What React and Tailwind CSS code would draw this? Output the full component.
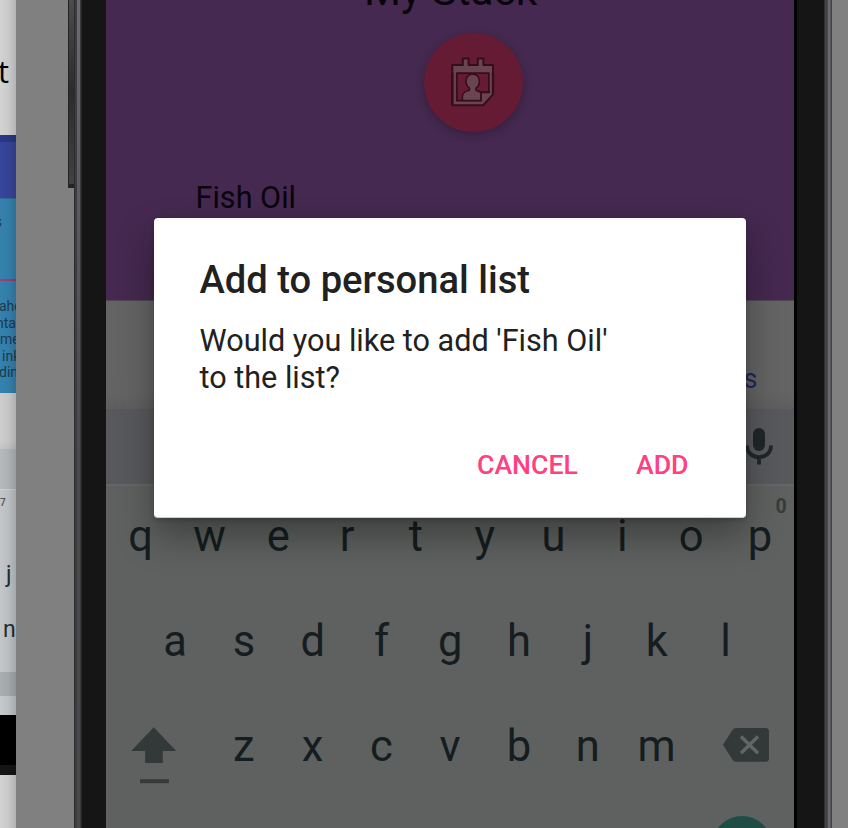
const TOP = ['q', 'w', 'e', 'r', 't', 'y', 'u', 'i', 'o', 'p'];
const MIDDLE = ['a', 's', 'd', 'f', 'g', 'h', 'j', 'k', 'l'];
const BOTTOM = ['z', 'x', 'c', 'v', 'b', 'n', 'm'];

function Key({ children }) {
  return (
    <div className="w-[68.8px] shrink-0 pl-[0.6px] text-center text-[43.5px] leading-[52px] text-[#151d20]">
      {children}
    </div>
  );
}

// Edge of the neighbouring phone's page
function NeighbourStrip() {
  return (
    <div className="relative flex w-4 shrink-0 flex-col overflow-hidden bg-[#d0d0d0]">
      <div className="flex h-[135px] shrink-0 justify-end bg-[#d3d3d3] pt-[51px] pr-[7px] font-['Open_Sans',sans-serif] text-[31px] leading-[40px] text-black">
        <span>t</span>
      </div>
      <div className="h-[7px] shrink-0 bg-[#2a3787]" />
      <div className="h-[56px] shrink-0 bg-[#37459b]" />
      <div className="flex h-[81px] shrink-0 justify-end border-t border-[#2e6f9a] bg-[#3582af] pt-[10px] pr-[14px] text-[17px] leading-[24px] text-[#1b3b4e]">
        <span>s</span>
      </div>
      <div className="h-[2px] shrink-0 bg-[#a23c78]" />
      <div className="flex h-[112px] shrink-0 flex-col bg-[#3582af] pt-[17px] text-[14px] leading-[16.5px] text-[#1b3b4e]">
        <span className="-ml-[1px]">ahe</span>
        <span className="-ml-[4px]">ntac</span>
        <span>me</span>
        <span className="ml-[2px]">ink</span>
        <span className="-ml-[1px]">ding</span>
      </div>
      <div className="h-[56px] shrink-0 bg-linear-to-b from-[#cecece] from-85% to-[#c4c4c4]" />
      <div className="h-[41px] shrink-0 border-b border-[#cfd3d5] bg-[#b6b9bb]" />
      <div className="h-[182px] shrink-0 bg-[#c2c6c8] text-[#222f35]">
        <div className="pt-[4px] text-[10px] leading-[18px] font-medium text-[#50585b]">7</div>
        <div className="mt-[49px] pl-[6px] text-[23px] leading-[27px]">j</div>
        <div className="mt-[28px] pl-[3px] text-[23px] leading-[27px]">n</div>
      </div>
      <div className="h-[24px] shrink-0 bg-[#a9aeb0]" />
      <div className="h-[19px] shrink-0 bg-[#c4c9cb]" />
      <div className="h-[50px] shrink-0 bg-black" />
      <div className="h-[10px] shrink-0 bg-[#151515]" />
      <div className="flex-1 bg-[#d2d2d2]" />
      <div className="absolute inset-0 bg-linear-to-r from-transparent via-black/4 to-black/15" />
    </div>
  );
}

function Rail() {
  return (
    <div className="flex w-2 shrink-0">
      <div className="w-[1px] bg-[#2c2c2e]" />
      <div className="w-[2px] bg-[#3d3d3f]" />
      <div className="w-[3px] bg-linear-to-b from-[#6c6b71] via-[#4c4b4f] to-[#49484b]" />
      <div className="w-[1px] bg-[#3a3a3c]" />
      <div className="w-[1px] bg-[#242425]" />
    </div>
  );
}

function RightRail() {
  return (
    <div className="flex w-2 shrink-0">
      <div className="w-[1px] bg-[#303032]" />
      <div className="w-[2px] bg-[#414143]" />
      <div className="w-[1px] bg-[#4c4c50]" />
      <div className="w-[2px] bg-[#69686d]" />
      <div className="w-[1px] bg-[#56565a]" />
      <div className="w-[1px] bg-[#424244]" />
    </div>
  );
}

function ContactButton() {
  return (
    <div className="mt-[18px] ml-[318px] size-[99px] rounded-full bg-[#651b33] shadow-[0_3px_10px_rgba(0,0,0,0.25)]">
      <svg width="99" height="99" viewBox="0 0 99 99" fill="none" strokeLinejoin="round">
        <path
          d="M28.3 32H38.8V25.4H44.6V32H53.8V25.4H59.4V32H69V61.3L59.3 72.2H28.3Z"
          fill="#6b4452"
          stroke="#350d1c"
          strokeWidth="2"
        />
        <path d="M28.3 39.6V71M69 39.6V61" stroke="#350d1c" strokeWidth="2.4" />
        <path d="M32.8 40.1H64.9V59.3H57V67.7H32.8Z" fill="#651b33" stroke="#350d1c" strokeWidth="1.8" />
        <path
          d="M38.4 67.5V63.5C38.4 60 42 57.8 45.4 57.2L45.6 55.2C40.2 51.5 41 41.3 48.7 41.3C56.4 41.3 57.2 51.5 51.8 55.2L52 57.2L57 59.5V67.5Z"
          fill="#6b4452"
          stroke="#350d1c"
          strokeWidth="1.5"
        />
        <path d="M57.2 68V59.5H66" stroke="#350d1c" strokeWidth="1.8" />
        <path d="M58 70.5V60.4H67.4Z" fill="#6b4452" />
      </svg>
    </div>
  );
}

function Dialog() {
  return (
    <div className="absolute top-[218px] left-[48px] flex h-[300px] w-[592px] flex-col rounded-[4px] border-b border-[#cbd0cd] bg-white pl-[46px] shadow-[0_18px_36px_rgba(0,0,0,0.34),0_2px_5px_rgba(0,0,0,0.18)]">
      <h1 className="mt-[40px] -ml-[0.5px] text-[38.15px] leading-[44px] font-medium whitespace-nowrap text-[#212121]">
        Add to personal list
      </h1>
      <p className="mt-[21px] -ml-[0.5px] text-[30.6px] leading-[36.5px] whitespace-nowrap text-[#212121]">
        Would you like to add 'Fish Oil'
        <br />
        to the list?
      </p>
      <div className="mt-[53px] flex justify-end gap-[58px] pr-[57.5px] text-[26.7px] leading-[32px] font-medium text-[#ff4081]">
        <button>CANCEL</button>
        <button>ADD</button>
      </div>
    </div>
  );
}

function Keyboard() {
  return (
    <div className="relative flex h-[344px] shrink-0 flex-col border-t-2 border-[#646766] bg-[#5e615f]">
      <span className="absolute top-[10px] left-[669.5px] text-[19.5px] leading-[22px] font-bold text-[#383c3d]">0</span>
      <div className="mt-[25px] flex">
        {TOP.map((k) => <Key key={k}>{k}</Key>)}
      </div>
      <div className="mt-[53px] flex justify-center">
        {MIDDLE.map((k) => <Key key={k}>{k}</Key>)}
      </div>
      <div className="mt-[53px] flex h-[52px] justify-between">
        <svg width="70" height="70" viewBox="0 0 70 70" className="ml-[14px] shrink-0">
          <path d="M33.7 6.2L56.2 30H42.8V42H25.2V30H11.2Z" fill="#333938" />
          <path d="M20 58.2H49V62.2H20Z" fill="#37393a" />
        </svg>
        <div className="ml-[19px] flex">
          {BOTTOM.map((k) => <Key key={k}>{k}</Key>)}
        </div>
        <svg width="48" height="52" viewBox="0 0 48 52" className="mr-[24px] ml-auto shrink-0">
          <path d="M1 23.8L10.5 9Q12 7 14 7H43.5Q47 7 47 10.5V37.3Q47 40.8 43.5 40.8H14Q12 40.8 10.5 38.8Z" fill="#333938" />
          <path d="M19 15.5L36 32.3M36 15.5L19 32.3" stroke="#616564" strokeWidth="3.5" />
        </svg>
      </div>
      <div className="mt-[43px] ml-[606px] size-[60px] shrink-0 rounded-full bg-[#204c46]" />
    </div>
  );
}

function Screen() {
  return (
    <div className="relative flex w-[688px] shrink-0 flex-col overflow-hidden">
      <div className="flex h-[300px] shrink-0 flex-col bg-[#452950]">
        <h2 className="-mt-[33px] ml-[258px] text-[42.4px] leading-[48px] whitespace-nowrap text-[#09040c]">My Stack</h2>
        <ContactButton />
        <p className="mt-[48px] ml-[89.5px] text-[30.6px] leading-[36px] text-[#09040c]">Fish Oil</p>
      </div>
      <div className="flex h-[109px] shrink-0 items-start justify-end border-t border-[#50474f] bg-linear-to-b from-[#646464] from-85% to-[#5e5e5e] pt-[61px] pr-[36.5px] text-[27px] leading-[34px] text-[#20255e]">
        items
      </div>
      <div className="flex h-[75px] shrink-0 justify-end bg-[#58595c] pr-[20px]">
        <svg width="30" height="75" viewBox="0 0 30 75">
          <rect x="9" y="19" width="12" height="23" rx="6" fill="#202728" />
          <path d="M3 36.5C3 52 27 52 27 36.5M15 48V55.5" fill="none" stroke="#202728" strokeWidth="3.8" />
        </svg>
      </div>
      <Keyboard />
      <Dialog />
    </div>
  );
}

export default function App() {
  return (
    <main className="flex h-[828px] w-[848px] overflow-hidden bg-[#808080] font-[Roboto,sans-serif]">
      <NeighbourStrip />
      <div className="flex w-[58px] shrink-0 justify-end bg-[#808080]">
        <div className="h-[188px] w-[6px] border-b-4 border-l border-[#242424] bg-linear-to-b from-[#4c4c4c] via-[#2c2c2c] to-[#424242]" />
      </div>
      <Rail />
      <div className="w-[24px] shrink-0 bg-[#151515]" />
      <Screen />
      <div className="w-[3px] shrink-0 bg-black" />
      <div className="w-[27px] shrink-0 bg-[#151515]" />
      <RightRail />
    </main>
  );
}
